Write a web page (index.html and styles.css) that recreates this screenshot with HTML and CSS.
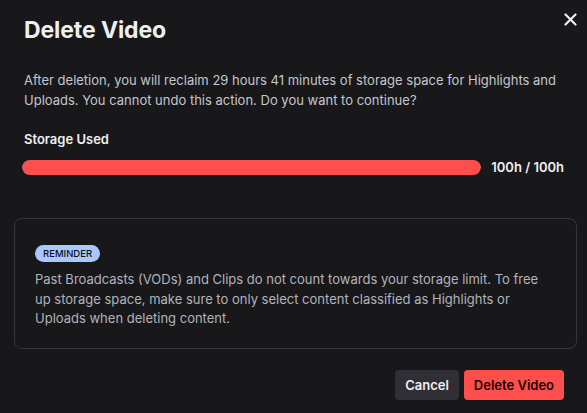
FILE: index.html
```html
<!DOCTYPE html>
<html lang="en">
<head>
  <meta charset="UTF-8">
  <title>Delete Video</title>
  <link rel="stylesheet" href="styles.css">
</head>
<body>
  <div class="modal">
    <div class="modal-head">
      <h1>Delete Video</h1>
      <button class="close" aria-label="Close">
        <svg width="13" height="13" viewBox="0 0 13 13"><path d="M1.5 1.5l10 10M11.5 1.5l-10 10" stroke="#efeff1" stroke-width="2.2" stroke-linecap="round"/></svg>
      </button>
    </div>

    <p class="intro">After deletion, you will reclaim 29 hours 41 minutes of storage space for Highlights and Uploads. You cannot undo this action. Do you want to continue?</p>

    <div class="storage">
      <div class="storage-label">Storage Used</div>
      <div class="storage-row">
        <div class="bar"><div class="bar-fill" style="width: 100%"></div></div>
        <span class="storage-value">100h / 100h</span>
      </div>
    </div>

    <div class="reminder">
      <span class="badge">REMINDER</span>
      <p>Past Broadcasts (VODs) and Clips do not count towards your storage limit. To free up storage space, make sure to only select content classified as Highlights or Uploads when deleting content.</p>
    </div>

    <div class="actions">
      <button class="btn btn-secondary">Cancel</button>
      <button class="btn btn-danger">Delete Video</button>
    </div>
  </div>
</body>
</html>
```

FILE: styles.css
```css
body {
  margin: 0;
  background-color: #18181b;
  color: #efeff1;
  font-family: Inter, "Noto Sans", sans-serif;
}

.modal {
  width: 587px;
  height: 413px;
  box-sizing: border-box;
  padding: 0 23px 0 24px;
}

.modal-head {
  display: flex;
  justify-content: space-between;
  align-items: flex-start;
}

h1 {
  margin: 16px 0 0;
  font-size: 23px;
  line-height: 28px;
  font-weight: 700;
  letter-spacing: -0.1px;
}

.close {
  margin: 13px -13px 0 0;
  padding: 0;
  width: 13px;
  height: 13px;
  background: none;
  border: 0;
  display: flex;
}

.intro {
  margin: 26px 0 0;
  font-size: 13px;
  line-height: 20px;
  color: #c6c6cd;
}

.storage {
  margin-top: 20px;
}

.storage-label {
  font-size: 13px;
  line-height: 18px;
  font-weight: 600;
}

.storage-row {
  display: flex;
  align-items: center;
  gap: 10px;
  margin: 11px 0 0 -2px;
}

.bar {
  flex: 1;
  height: 15px;
  border-radius: 8px;
  background-color: #3a3a3d;
  overflow: hidden;
}

.bar-fill {
  height: 100%;
  background-color: #ff4f4d;
  border-radius: 8px;
}

.storage-value {
  font-size: 13px;
  font-weight: 600;
  white-space: nowrap;
}

.reminder {
  margin: 43px -13px 0 -10px;
  border: 1px solid #35353b;
  border-radius: 8px;
  padding: 22px 20px 19px 20px;
}

.badge {
  display: inline-block;
  background-color: #aac8ff;
  color: #0e0e10;
  font-size: 9.5px;
  font-weight: 500;
  line-height: 17px;
  padding: 0 8px;
  border-radius: 9px;
}

.reminder p {
  margin: 8px 0 0;
  font-size: 13px;
  line-height: 19.5px;
  color: #b3b3bb;
}

.actions {
  display: flex;
  justify-content: flex-end;
  gap: 5px;
  margin-top: 21px;
}

.btn {
  height: 30px;
  border: 0;
  border-radius: 4px;
  font-family: Inter, "Noto Sans", sans-serif;
  font-size: 13px;
  font-weight: 600;
  padding: 0 10px;
}

.btn-secondary {
  background-color: #2f2f35;
  color: #efeff1;
}

.btn-danger {
  background-color: #ff4f4d;
  color: #1a0000;
}
```
